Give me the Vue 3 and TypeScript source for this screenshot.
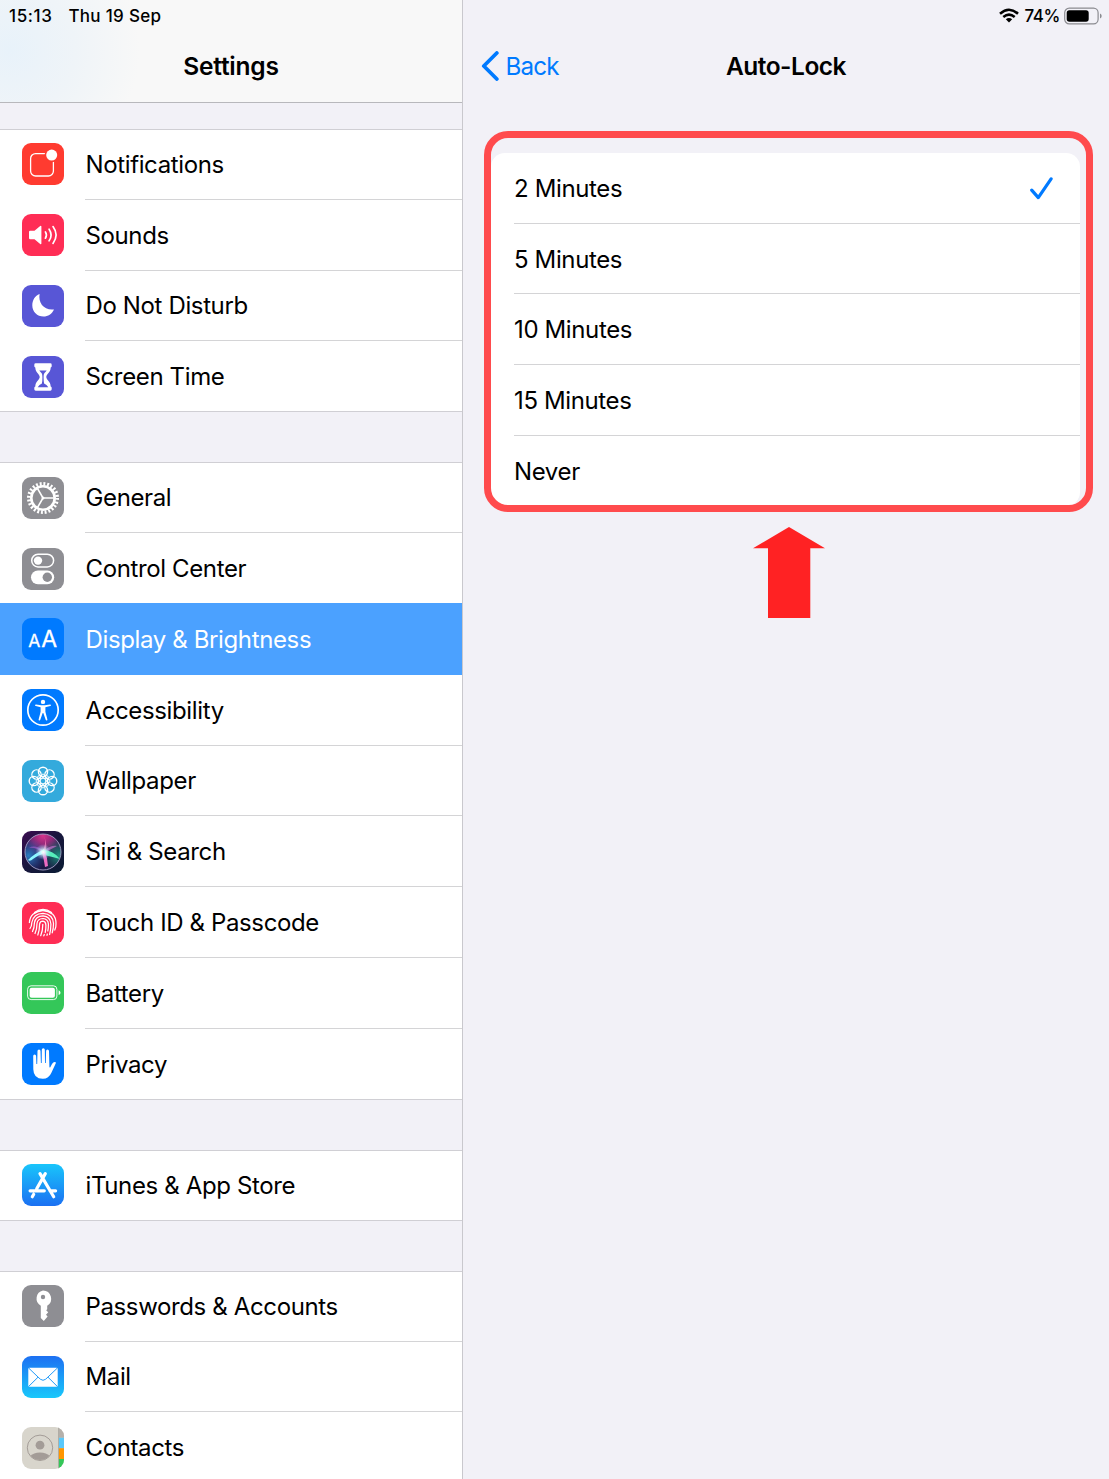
<template>
  <div class="screen">
    <!-- left column -->
    <aside class="sidebar">
      <header class="sidebar-header">
        <div class="status-left">
          <span class="status-time">15:13</span>
          <span class="status-date">Thu 19 Sep</span>
        </div>
        <h1 class="nav-title">Settings</h1>
      </header>

      <div class="sidebar-scroll">
        <ul v-for="(group, index) in groups" :key="index" class="group">
          <li
              v-for="item in group"
              :key="item.id"
              class="row"
              :class="{ selected: item.id === selectedId }"
              @click="selectedId = item.id"
          >
            <svg class="row-icon" :class="item.id" viewBox="0 0 42 42">
              <g v-if="item.id === 'notifications'">
                <rect x="8.6" y="10.6" width="22.8" height="22.4" rx="5" fill="none" stroke="#fff" stroke-width="1.3" />
                <circle cx="29.7" cy="12.1" r="7.2" fill="#ff3b30" />
                <circle cx="29.7" cy="12.1" r="5.5" fill="#fff" />
              </g>

              <g v-else-if="item.id === 'sounds'">
                <path d="M8.2 16.8h4.3l5.700-4.700q1.200-.8 1.200.6v16.600q0 1.400-1.200.6l-5.700-4.700H8.200Q7 25.200 7 24v-6q0-1.200 1.200-1.200Z" fill="#fff" />
                <g fill="none" stroke="#fff" stroke-width="1.700" stroke-linecap="round">
                  <path d="M23.400 17.900q2 3.100 0 6.300" />
                  <path d="M27.100 15.200q4 5.800 0 11.600" />
                  <path d="M31 12.600q6.200 8.400 0 16.800" />
                </g>
              </g>

              <path
                  v-else-if="item.id === 'dnd'"
                  d="M17.6 8.9C16 17.8 22 25.6 32 24.4C30 28.8 26.1 31.4 21.5 31.4C15.1 31.4 10.3 26.5 10.3 20.4C10.3 15 13 10.5 17.6 8.9Z"
                  fill="#fff"
              />

              <g v-else-if="item.id === 'screentime'">
                <path d="M13.7 7.3h14.6q1.4 0 1.4 1.4v1.500q0 1-1 1.300c0 5.500-4.400 6.300-4.400 9.500s4.400 4 4.400 9.500q1 .3 1 1.300v1.500q0 1.400-1.400 1.400H13.700q-1.400 0-1.400-1.400v-1.500q0-1 1-1.300c0-5.500 4.400-6.300 4.400-9.500s-4.400-4-4.400-9.500q-1-.3-1-1.300V8.700q0-1.400 1.400-1.400Z" fill="#fff" />
                <path d="M17.300 14.500h7.400q-.8 1.300-2.400 2.700-.8 1-.7 3.800 0 4.500.5 6.500 2.700 1.200 4.200 3.800H15.700q1.500-2.600 4.200-3.800.5-2 .5-6.500 0-2.800-.7-3.800-1.600-1.400-2.400-2.700Z" fill="#5856d6" />
              </g>

              <g v-else-if="item.id === 'general'" fill="none" stroke="#fff">
                <circle cx="21" cy="21" r="14.2" stroke-width="3.600" stroke-dasharray="1.917 1.800" />
                <circle cx="21" cy="21" r="11.700" stroke-width="2.600" />
                <path d="M21 21H32M21 21L15.500 11.500M21 21L15.500 30.500" stroke-width="1.500" />
                <circle cx="21" cy="21" r="1.500" fill="#fff" stroke="none" />
              </g>

              <g v-else-if="item.id === 'control'">
                <rect x="9.700" y="6.300" width="21.900" height="12.600" rx="6.300" fill="none" stroke="#fff" stroke-width="1.500" />
                <circle cx="16" cy="12.600" r="4.200" fill="#fff" />
                <rect x="9" y="22.400" width="23.200" height="13.800" rx="6.900" fill="#fff" />
                <circle cx="25.300" cy="29.300" r="4.700" fill="#8e8e93" />
              </g>

              <g v-else-if="item.id === 'display'" fill="#fff" stroke="#fff" stroke-width=".3" font-family="Inter, sans-serif">
                <text x="6.300" y="29.300" font-size="17.500">A</text>
                <text x="19.300" y="29.300" font-size="23">A</text>
              </g>

              <g v-else-if="item.id === 'accessibility'">
                <circle cx="21" cy="21" r="15.200" fill="none" stroke="#fff" stroke-width="1.700" />
                <circle cx="21" cy="12.900" r="2.200" fill="#fff" />
                <path d="M14 15.500l5.200.8h3.600l5.200-.8q1 0 1 .8 0 .6-.8.8l-4.800 1.100v4.500l2 7.700q.1.900-.7 1-.7.100-1-.6L21.300 24h-.6l-2.400 6.800q-.3.700-1 .6-.8-.1-.7-1l2-7.700v-4.500l-4.800-1.100q-.8-.2-.8-.8 0-.8 1-.8Z" fill="#fff" />
              </g>

              <g v-else-if="item.id === 'wallpaper'" fill="none" stroke="#fff" stroke-width="1.400">
                <circle
                    v-for="n in 8"
                    :key="n"
                    cx="21"
                    cy="11.800"
                    r="4.600"
                    :transform="`rotate(${n * 45} 21 21)`"
                />
                <ellipse
                    v-for="n in 4"
                    :key="`p${n}`"
                    cx="21"
                    cy="21"
                    rx="2.700"
                    ry="7"
                    stroke-width=".9"
                    :transform="`rotate(${n * 45} 21 21)`"
                />
              </g>

              <g v-else-if="item.id === 'siri'">
                <defs>
                  <radialGradient id="siri-pink" cx=".5" cy=".05" r=".65">
                    <stop offset="0" stop-color="#d8338b" />
                    <stop offset=".5" stop-color="#a52c86" stop-opacity=".75" />
                    <stop offset="1" stop-color="#5a2274" stop-opacity="0" />
                  </radialGradient>
                  <radialGradient id="siri-blue" cx=".1" cy=".6" r=".5">
                    <stop offset="0" stop-color="#2b7fc2" />
                    <stop offset="1" stop-color="#2a52a5" stop-opacity="0" />
                  </radialGradient>
                  <radialGradient id="siri-green" cx=".95" cy=".6" r=".5">
                    <stop offset="0" stop-color="#1d9480" />
                    <stop offset="1" stop-color="#126659" stop-opacity="0" />
                  </radialGradient>
                  <radialGradient id="siri-glow">
                    <stop offset="0" stop-color="#fff" />
                    <stop offset=".3" stop-color="#dff" stop-opacity=".8" />
                    <stop offset="1" stop-color="#9cf" stop-opacity="0" />
                  </radialGradient>
                </defs>
                <circle cx="21" cy="21" r="18" fill="#1c1745" />
                <circle cx="21" cy="21" r="18" fill="url(#siri-pink)" />
                <circle cx="21" cy="21" r="18" fill="url(#siri-blue)" />
                <circle cx="21" cy="21" r="18" fill="url(#siri-green)" />
                <path d="M22 20Q13 13 7 17Q14 16 21 22Z" fill="#a55fd0" opacity=".65" />
                <path d="M20 21Q25 12 22 5Q26 14 23 22Z" fill="#f37bb8" opacity=".8" />
                <path d="M21 20Q29 14 35 15Q28 18 22 23Z" fill="#cc75d6" opacity=".65" />
                <path d="M22 18.500Q13 22 6 29Q8 31 11 28Q16 24 24 22Z" fill="#8af7ff" />
                <path d="M20 19Q31 19 38 28Q31 26 22 24Z" fill="#55efba" />
                <path d="M20 21Q22 29 23 36L26 35Q25.500 27 23 20Z" fill="#ec6bc2" />
                <circle cx="21.200" cy="21" r="8" fill="url(#siri-glow)" />
                <circle cx="21" cy="21" r="18" fill="none" stroke="#a7a3c8" stroke-width=".9" />
              </g>

              <g v-else-if="item.id === 'touchid'" fill="none" stroke="#fff" stroke-width="1.250" stroke-linecap="round">
                <path d="M12.400 10.500Q21 4.300 29.600 10.500" />
                <path d="M7.400 20.500Q7.800 15 11 12.200Q21 4.800 30.700 12.200Q34 15.500 34 21.500Q34.200 25 32.800 28" />
                <path d="M8 26.500Q9.800 24 9.800 20.500Q11.500 11.500 21 11.300Q31 12 31.500 21.500Q31.500 27 30.200 30.800" />
                <path d="M10.500 29.500Q12.400 26 12.400 21Q13.500 14 21 13.900Q28.400 14.500 28.900 22Q28.900 28 27.600 32.500" />
                <path d="M13 31.500Q15 27 15 21.500Q15.500 16.600 21 16.500Q26 17 26.400 22Q26.500 26 25.800 29" />
                <path d="M15.800 33Q17.600 28 17.600 22Q18 19.200 21 19.200Q23.700 19.500 23.900 23Q24 27 23.200 30.500" />
                <path d="M18.700 33.700Q20.800 29 20.800 22.300" />
                <path d="M21.800 33.800L22.300 32.500M25 33.300L25.300 32" />
              </g>

              <g v-else-if="item.id === 'battery'">
                <rect x="5.600" y="13.800" width="29.300" height="13.800" rx="3.500" fill="none" stroke="#fff" stroke-width=".9" />
                <rect x="7.600" y="15.700" width="25.300" height="10" rx="2" fill="#fff" />
                <path d="M36.600 18.300q1.900.6 1.900 2.400t-1.900 2.400Z" fill="#fff" />
              </g>

              <path
                  v-else-if="item.id === 'privacy'"
                  d="M11.200 13q0-1.500 1.400-1.500t1.500 1.500l.3 8h.8l.3-13q0-1.500 1.500-1.500T18.500 8l.4 12h.8l.1-13.200q0-1.500 1.500-1.500t1.500 1.500L23 20h.8l.3-12q0-1.500 1.400-1.500T27 8l.4 15.800q.1 1 .9.400l1.700-3.200q1.300-2.200 3.200-1.900 1 .2.500 1.300l-4.300 9.400q-2.600 6-8.600 6-9.300 0-9.500-9.500Z"
                  fill="#fff"
              />

              <g v-else-if="item.id === 'appstore'" fill="none" stroke="#fff" stroke-width="3.200" stroke-linecap="round">
                <path d="M23.300 9.600L14.700 24.800M18 9.600L31.700 32.700M8.100 26.800H22.300M28 26.800H33.600M11.700 30.300L10.300 32.700" />
              </g>

              <g v-else-if="item.id === 'passwords'">
                <path d="M21 5.500a8.200 8.200 0 0 1 4.200 15.200v3.500l-1 1.100 2 2-2.200 2.400 1.600 1.900-3.800 4.400-3-3V20.700A8.200 8.200 0 0 1 21 5.500Z" fill="#fff" />
                <circle cx="21" cy="12" r="2.200" fill="#8e8e93" />
              </g>

              <g v-else-if="item.id === 'mail'">
                <rect x="6.300" y="11.700" width="29.400" height="19" rx="1.300" fill="#fff" />
                <path d="M6.600 12L18.300 23.200Q21 25.400 23.700 23.200L35.400 12M6.600 30.500L16 21.200M35.400 30.500L26 21.200" fill="none" stroke="#219bf9" stroke-width="1" />
              </g>

              <g v-else-if="item.id === 'contacts'">
                <rect x="36.600" width="5.400" height="10.800" fill="#b5b0aa" />
                <rect x="36.600" y="10.800" width="5.400" height="10.400" fill="#5ac8fa" />
                <rect x="36.600" y="21.200" width="5.400" height="10.800" fill="#ff9500" />
                <rect x="36.600" y="32" width="5.400" height="10" fill="#34c759" />
                <path d="M36.500 0V42" stroke="#aaa79f" stroke-width=".8" />
                <circle cx="18" cy="20.800" r="12.700" fill="none" stroke="#a39c97" stroke-width="1" />
                <circle cx="18" cy="18.200" r="4.400" fill="#a39c97" />
                <path d="M8.600 28.700Q11.300 25.500 18 25.400Q24.700 25.500 27.400 28.700Q23.500 33 18 33T8.600 28.700Z" fill="#a39c97" />
              </g>
            </svg>
            <span class="row-label">{{ item.title }}</span>
          </li>
        </ul>
      </div>
    </aside>

    <!-- right column -->
    <main class="detail">
      <div class="status-right">
        <svg class="wifi" viewBox="0 0 20 15">
          <path d="M10 14.500L6.800 11.200Q10 8.700 13.200 11.200Z" fill="#000" />
          <g fill="none" stroke="#000" stroke-width="2.500">
            <path d="M4.300 9Q10 4.200 15.700 9" />
            <path d="M1 5.700Q10 -2.300 19 5.700" />
          </g>
        </svg>
        <span class="percent">74%</span>
        <svg class="power" viewBox="0 0 38 18">
          <rect x=".7" y="1.200" width="33.400" height="15.600" rx="4.600" fill="none" stroke="#8b8b90" stroke-width="1.200" />
          <rect x="2.700" y="3.200" width="22" height="11.600" rx="2.700" fill="#000" />
          <path d="M36 6.400q1.700.8 1.700 2.600T36 11.600Z" fill="#8b8b90" />
        </svg>
      </div>

      <nav class="detail-nav">
        <a class="back">
          <svg class="chevron" viewBox="0 0 18 30">
            <path d="M15.800 2L2.800 15L15.800 28" fill="none" stroke="#007aff" stroke-width="3.800" stroke-linecap="round" stroke-linejoin="round" />
          </svg>
          <span>Back</span>
        </a>
        <h2 class="nav-title">Auto-Lock</h2>
      </nav>

      <ul class="options">
        <li v-for="option in options" :key="option" class="option" @click="current = option">
          <span class="row-label">{{ option }}</span>
          <svg v-if="option === current" class="check" viewBox="0 0 24 24">
            <path d="M1.700 14.100L8.300 21.600L21.100 2.900" fill="none" stroke="#007aff" stroke-width="3.200" stroke-linecap="round" stroke-linejoin="round" />
          </svg>
        </li>
      </ul>

      <!-- callout over the option list -->
      <div class="callout-frame"></div>
      <svg class="callout-arrow" viewBox="0 0 72 91">
        <path d="M36 0L72 21.300H57.300V91H15V21.300H0Z" fill="#ff2223" />
      </svg>
    </main>
  </div>
</template>

<script lang="ts" setup>
import { ref } from 'vue'

interface SettingItem {
  id: string
  title: string
}

const selectedId = ref('display')
const current = ref('2 Minutes')

const groups: SettingItem[][] = [
  [
    { id: 'notifications', title: 'Notifications' },
    { id: 'sounds', title: 'Sounds' },
    { id: 'dnd', title: 'Do Not Disturb' },
    { id: 'screentime', title: 'Screen Time' },
  ],
  [
    { id: 'general', title: 'General' },
    { id: 'control', title: 'Control Center' },
    { id: 'display', title: 'Display & Brightness' },
    { id: 'accessibility', title: 'Accessibility' },
    { id: 'wallpaper', title: 'Wallpaper' },
    { id: 'siri', title: 'Siri & Search' },
    { id: 'touchid', title: 'Touch ID & Passcode' },
    { id: 'battery', title: 'Battery' },
    { id: 'privacy', title: 'Privacy' },
  ],
  [{ id: 'appstore', title: 'iTunes & App Store' }],
  [
    { id: 'passwords', title: 'Passwords & Accounts' },
    { id: 'mail', title: 'Mail' },
    { id: 'contacts', title: 'Contacts' },
  ],
]

const options: string[] = ['2 Minutes', '5 Minutes', '10 Minutes', '15 Minutes', 'Never']
</script>

<style>
body {
  margin: 0;
  background: #f2f1f7;
}
</style>

<style scoped>
.screen {
  display: flex;
  width: 1109px;
  height: 1479px;
  overflow: hidden;
  background: #f2f1f7;
  color: #000;
  font-family: Inter, "Liberation Sans", sans-serif;
}

ul {
  list-style: none;
  margin: 0;
  padding: 0;
}

/* 左侧设置列表 */
.sidebar {
  box-sizing: border-box;
  width: 463px;
  flex: none;
  border-right: 1px solid #c9c8cd;
}

.sidebar-header {
  box-sizing: border-box;
  height: 103px;
  border-bottom: 1px solid #b8b8bc;
  background: radial-gradient(ellipse 130px 130px at 10px 50px, #e8f2fa, #eff4f8 50%, rgba(247, 247, 247, 0)), #f8f8f8;
}

.status-left {
  display: flex;
  gap: 16px;
  height: 31px;
  padding-left: 9px;
  align-items: center;
  font-size: 17px;
  font-weight: 500;
}

.status-time {
  letter-spacing: 0.6px;
}

.status-date {
  letter-spacing: 0.3px;
}

.nav-title {
  margin: 0;
  text-align: center;
  font-size: 24.500px;
  font-weight: 600;
  line-height: 30px;
  letter-spacing: -0.5px;
}

.sidebar-header .nav-title {
  padding-top: 20px;
  letter-spacing: -0.2px;
}

.sidebar-scroll {
  padding-top: 26px;
}

.group {
  position: relative;
  margin-bottom: 50.200px;
  background: #fff;
  box-shadow: inset 0 1px #d0cfd4, inset 0 -1px #d0cfd4;
}

.row {
  display: flex;
  align-items: center;
  height: 70.800px;
  padding-left: 22px;
  background: linear-gradient(#d4d4d6, #d4d4d6) 85px 100% / 100% 1px no-repeat;
  cursor: pointer;
}

.row:last-child {
  background: none;
}

/* 选中行盖住上方分隔线 */
.row.selected {
  background: #4ba1ff;
  box-shadow: 0 -1px #4ba1ff;
  color: #fff;
}

.row-icon {
  flex: none;
  width: 42px;
  height: 42px;
  margin-right: 21.500px;
  border-radius: 9px;
}

.row-label {
  font-size: 24px;
  letter-spacing: -0.370px;
  white-space: nowrap;
}

.notifications {
  background: #ff3b30;
}

.sounds,
.touchid {
  background: #ff2d55;
}

.dnd,
.screentime {
  background: #5856d6;
}

.general,
.control,
.passwords {
  background: #8e8e93;
}

.display,
.accessibility,
.privacy {
  background: #007aff;
}

.wallpaper {
  background: #34aadc;
}

.siri {
  background: linear-gradient(135deg, #3b0d50, #17163c 50%, #0a1c33);
}

.battery {
  background: #34c759;
}

.appstore {
  background: linear-gradient(#19c5fb, #1b70f2);
}

.mail {
  background: linear-gradient(#1d70f2, #19c8fb);
}

.contacts {
  background: #d8d5cc;
}

/* 右侧详情 */
.detail {
  position: relative;
  flex: 1;
}

.status-right {
  display: flex;
  justify-content: flex-end;
  align-items: center;
  height: 31px;
  padding-right: 7px;
  font-size: 17px;
  font-weight: 500;
}

.wifi {
  width: 20px;
  height: 15px;
  margin-right: 5px;
}

.percent {
  margin-right: 4px;
  letter-spacing: -0.4px;
}

.power {
  width: 38px;
  height: 18px;
}

.detail-nav {
  display: grid;
  grid-template-columns: 1fr auto 1fr;
  align-items: center;
  height: 70px;
  padding-left: 18px;
  padding-right: 18px;
}

.back {
  display: flex;
  align-items: center;
  color: #007aff;
  font-size: 24.200px;
  letter-spacing: -0.8px;
}

.chevron {
  width: 18px;
  height: 30px;
  margin-right: 6.500px;
}

.options {
  margin: 52px 29px 0 28px;
  border-radius: 14px;
  background: #fff;
}

.option {
  box-sizing: border-box;
  display: flex;
  align-items: center;
  justify-content: space-between;
  height: 70.700px;
  padding: 0 26px 0 23px;
  background: linear-gradient(#d4d4d6, #d4d4d6) 23px 100% / 100% 1px no-repeat;
}

.option:last-child {
  background: none;
}

.check {
  width: 24px;
  height: 24px;
}

/* 标注 */
.callout-frame {
  position: absolute;
  box-sizing: border-box;
  left: 21px;
  top: 131px;
  width: 609px;
  height: 381px;
  border: 7px solid #ff4b4d;
  border-radius: 24px;
}

.callout-arrow {
  position: absolute;
  left: 290px;
  top: 527px;
  width: 72px;
  height: 91px;
}
</style>
